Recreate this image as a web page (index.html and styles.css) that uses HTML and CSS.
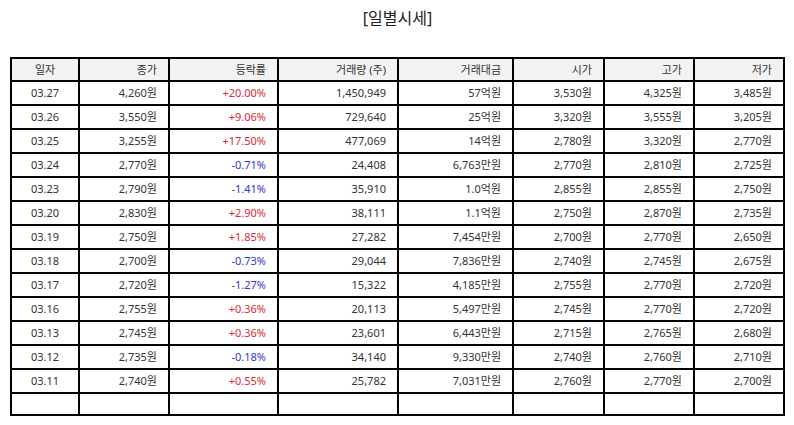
FILE: index.html
```html
<!DOCTYPE html>
<html lang="ko">
<head>
<meta charset="utf-8">
<title>일별시세</title>
<link rel="stylesheet" href="styles.css">
</head>
<body>
<div class="page">
  <h1 class="title">[일별시세]</h1>
  <table class="quotes">
    <thead>
      <tr>
        <th class="c1">일자</th>
        <th class="c2">종가</th>
        <th class="c3">등락률</th>
        <th class="c4">거래량 (주)</th>
        <th class="c5">거래대금</th>
        <th class="c6">시가</th>
        <th class="c7">고가</th>
        <th class="c8">저가</th>
      </tr>
    </thead>
    <tbody>
      <tr><td>03.27</td><td>4,260원</td><td class="up">+20.00%</td><td>1,450,949</td><td>57억원</td><td>3,530원</td><td>4,325원</td><td>3,485원</td></tr>
      <tr><td>03.26</td><td>3,550원</td><td class="up">+9.06%</td><td>729,640</td><td>25억원</td><td>3,320원</td><td>3,555원</td><td>3,205원</td></tr>
      <tr><td>03.25</td><td>3,255원</td><td class="up">+17.50%</td><td>477,069</td><td>14억원</td><td>2,780원</td><td>3,320원</td><td>2,770원</td></tr>
      <tr><td>03.24</td><td>2,770원</td><td class="down">-0.71%</td><td>24,408</td><td>6,763만원</td><td>2,770원</td><td>2,810원</td><td>2,725원</td></tr>
      <tr><td>03.23</td><td>2,790원</td><td class="down">-1.41%</td><td>35,910</td><td>1.0억원</td><td>2,855원</td><td>2,855원</td><td>2,750원</td></tr>
      <tr><td>03.20</td><td>2,830원</td><td class="up">+2.90%</td><td>38,111</td><td>1.1억원</td><td>2,750원</td><td>2,870원</td><td>2,735원</td></tr>
      <tr><td>03.19</td><td>2,750원</td><td class="up">+1.85%</td><td>27,282</td><td>7,454만원</td><td>2,700원</td><td>2,770원</td><td>2,650원</td></tr>
      <tr><td>03.18</td><td>2,700원</td><td class="down">-0.73%</td><td>29,044</td><td>7,836만원</td><td>2,740원</td><td>2,745원</td><td>2,675원</td></tr>
      <tr><td>03.17</td><td>2,720원</td><td class="down">-1.27%</td><td>15,322</td><td>4,185만원</td><td>2,755원</td><td>2,770원</td><td>2,720원</td></tr>
      <tr><td>03.16</td><td>2,755원</td><td class="up">+0.36%</td><td>20,113</td><td>5,497만원</td><td>2,745원</td><td>2,770원</td><td>2,720원</td></tr>
      <tr><td>03.13</td><td>2,745원</td><td class="up">+0.36%</td><td>23,601</td><td>6,443만원</td><td>2,715원</td><td>2,765원</td><td>2,680원</td></tr>
      <tr><td>03.12</td><td>2,735원</td><td class="down">-0.18%</td><td>34,140</td><td>9,330만원</td><td>2,740원</td><td>2,760원</td><td>2,710원</td></tr>
      <tr><td>03.11</td><td>2,740원</td><td class="up">+0.55%</td><td>25,782</td><td>7,031만원</td><td>2,760원</td><td>2,770원</td><td>2,700원</td></tr>
      <tr class="empty"><td></td><td></td><td></td><td></td><td></td><td></td><td></td><td></td></tr>
    </tbody>
  </table>
</div>
</body>
</html>
```
FILE: styles.css
```css
html, body {
  margin: 0;
  padding: 0;
  background: #ffffff;
}

.page {
  padding: 0 9px 0 10px;
  font-family: "Noto Sans", "Noto Sans CJK KR", sans-serif;
  color: #333333;
}

.title {
  margin: 0;
  padding-top: 6px;
  height: 24px;
  line-height: 24px;
  font-size: 16px;
  font-weight: normal;
  text-align: center;
  color: #222222;
}

.quotes {
  margin-top: 27px;
  width: 775px;
  box-sizing: border-box;
  table-layout: fixed;
  border-collapse: separate;
  border-spacing: 0;
  border: 1px solid #000000;
  font-size: 11px;
}

.quotes th,
.quotes td {
  box-sizing: border-box;
  border: 1px solid #000000;
  padding: 0 11px 0 4px;
  text-align: right;
  white-space: nowrap;
  font-weight: normal;
}

.quotes th {
  background: #f2f2f2;
  height: 23px;
  line-height: 21px;
}

.quotes td {
  height: 24px;
  line-height: 22px;
}

.quotes .empty td {
  height: 22px;
}

.quotes th:first-child,
.quotes td:first-child {
  text-align: center;
  padding: 0;
}

.c1 { width: 68px; }
.c2 { width: 90px; }
.c3 { width: 109px; }
.c4 { width: 120px; }
.c5 { width: 115px; }
.c6 { width: 91px; }
.c7 { width: 90px; }
.c8 { width: 90px; }

.up { color: #e0283a; }
.down { color: #3636d0; }
```
